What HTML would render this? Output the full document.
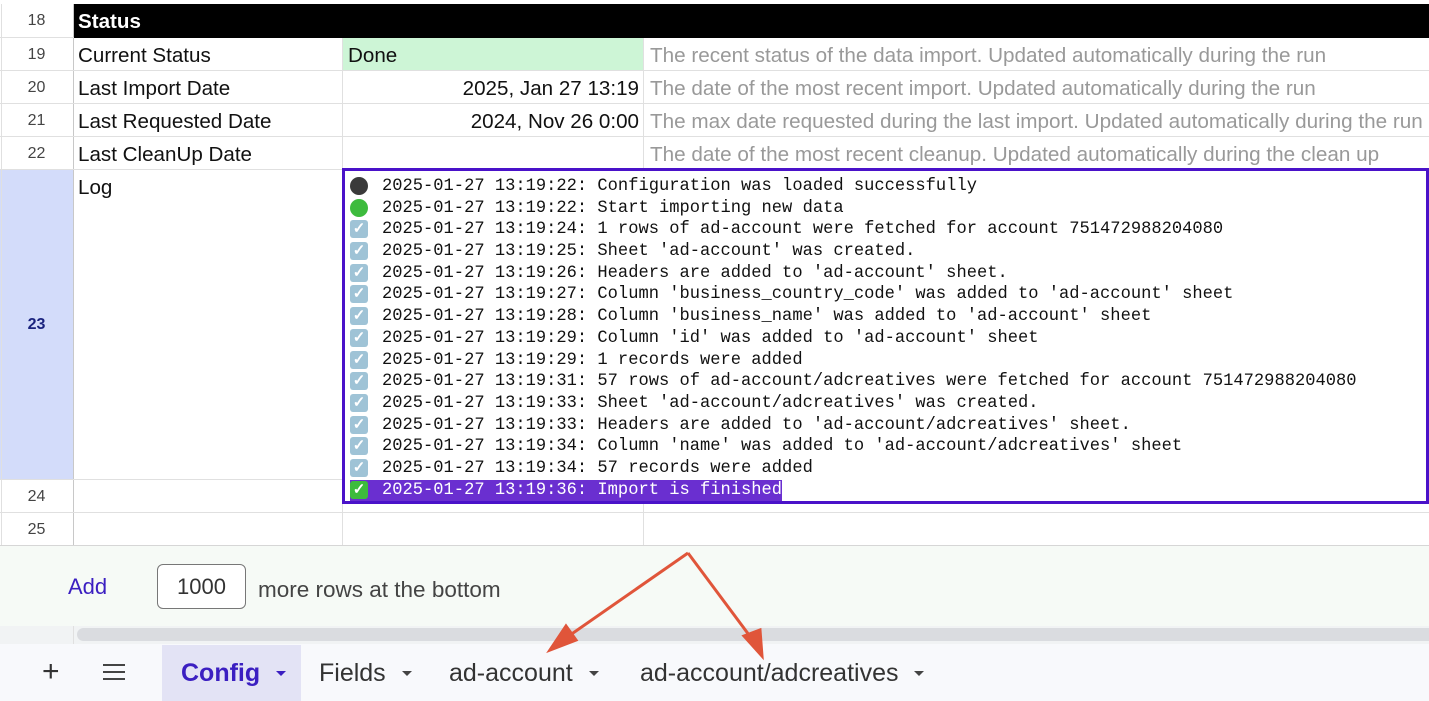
<!DOCTYPE html>
<html><head><style>
*{margin:0;padding:0;box-sizing:border-box}
body{width:1429px;height:701px;overflow:hidden;background:#fff;font-family:"Liberation Sans",Arial,sans-serif;position:relative}
.a{position:absolute}
.hl{position:absolute;height:1px;background:#e0e0e0}
.vl{position:absolute;width:1px;background:#e0e0e0}
.rn{position:absolute;left:0;width:73px;text-align:center;font-size:16px;color:#444}
.t{position:absolute;font-size:20.6px;color:#111;white-space:nowrap}
.g{position:absolute;font-size:20.7px;color:#999;white-space:nowrap;left:650px}
.log{position:absolute;left:342px;top:168px;width:1087px;height:336px;border:3px solid #4a12c9;background:#fff;font-family:"Liberation Mono",monospace;font-size:17.1px;line-height:21.7px;color:#111;padding:5px 0 0 5px;white-space:pre;overflow:hidden}
.ln{height:21.7px}
.ic{display:inline-block;width:18px;height:18px;vertical-align:top;margin-top:1px;margin-right:14px;border-radius:3px}
.ck{background:#9fc3d6;color:#fff;font-family:"Liberation Sans";font-size:15px;line-height:18px;text-align:center;font-weight:bold}
.tab{position:absolute;top:645px;height:56px;font-size:25px;line-height:56px;color:#333;white-space:nowrap}
.tr{display:inline-block;border-left:5px solid transparent;border-right:5px solid transparent;border-top:5px solid #444;vertical-align:5px;margin-left:16px}
</style></head><body>
<div class="a" style="left:74px;top:4px;width:1355px;height:34px;background:#000"></div>
<div class="a" style="left:78px;top:10px;color:#fff;font-weight:bold;font-size:20.6px">Status</div>
<div class="a" style="left:0;top:170px;width:73px;height:309px;background:#d3dcfa"></div>
<div class="a" style="left:343px;top:38px;width:300px;height:32px;background:#cdf5d6"></div>
<div class="vl" style="left:1px;top:4px;height:542px"></div>
<div class="vl" style="left:73px;top:4px;height:542px;background:#c8c8c8"></div>
<div class="vl" style="left:342px;top:38px;height:508px"></div>
<div class="vl" style="left:643px;top:38px;height:508px"></div>
<div class="hl" style="left:0;top:37px;width:74px"></div>
<div class="hl" style="left:0;top:70px;width:1429px"></div>
<div class="hl" style="left:0;top:103px;width:1429px"></div>
<div class="hl" style="left:0;top:136px;width:1429px"></div>
<div class="hl" style="left:0;top:169px;width:1429px"></div>
<div class="hl" style="left:0;top:479px;width:342px"></div>
<div class="hl" style="left:0;top:512px;width:1429px"></div>
<div class="hl" style="left:0;top:545px;width:1429px;background:#d6d6d6"></div>
<div class="rn" style="top:12px">18</div>
<div class="rn" style="top:46px">19</div>
<div class="rn" style="top:79px">20</div>
<div class="rn" style="top:112px">21</div>
<div class="rn" style="top:145px">22</div>
<div class="rn" style="top:316px;font-weight:bold;color:#1a237e">23</div>
<div class="rn" style="top:488px">24</div>
<div class="rn" style="top:521px">25</div>
<div class="t" style="left:78px;top:44px">Current Status</div>
<div class="t" style="left:78px;top:77px">Last Import Date</div>
<div class="t" style="left:78px;top:110px">Last Requested Date</div>
<div class="t" style="left:78px;top:143px">Last CleanUp Date</div>
<div class="t" style="left:78px;top:176px">Log</div>
<div class="t" style="left:348px;top:44px">Done</div>
<div class="t" style="right:790px;top:77px">2025, Jan 27 13:19</div>
<div class="t" style="right:790px;top:110px">2024, Nov 26 0:00</div>
<div class="g" style="top:44px">The recent status of the data import. Updated automatically during the run</div>
<div class="g" style="top:77px">The date of the most recent import. Updated automatically during the run</div>
<div class="g" style="top:110px">The max date requested during the last import. Updated automatically during the run</div>
<div class="g" style="top:143px">The date of the most recent cleanup. Updated automatically during the clean up</div>
<div class="log"><div class="ln"><span class="ic" style="background:#3a3a3a;border-radius:50%"></span>2025-01-27 13:19:22: Configuration was loaded successfully</div><div class="ln"><span class="ic" style="background:#3dbb3d;border-radius:50%"></span>2025-01-27 13:19:22: Start importing new data</div><div class="ln"><span class="ic ck">✓</span>2025-01-27 13:19:24: 1 rows of ad-account were fetched for account 751472988204080</div><div class="ln"><span class="ic ck">✓</span>2025-01-27 13:19:25: Sheet 'ad-account' was created.</div><div class="ln"><span class="ic ck">✓</span>2025-01-27 13:19:26: Headers are added to 'ad-account' sheet.</div><div class="ln"><span class="ic ck">✓</span>2025-01-27 13:19:27: Column 'business_country_code' was added to 'ad-account' sheet</div><div class="ln"><span class="ic ck">✓</span>2025-01-27 13:19:28: Column 'business_name' was added to 'ad-account' sheet</div><div class="ln"><span class="ic ck">✓</span>2025-01-27 13:19:29: Column 'id' was added to 'ad-account' sheet</div><div class="ln"><span class="ic ck">✓</span>2025-01-27 13:19:29: 1 records were added</div><div class="ln"><span class="ic ck">✓</span>2025-01-27 13:19:31: 57 rows of ad-account/adcreatives were fetched for account 751472988204080</div><div class="ln"><span class="ic ck">✓</span>2025-01-27 13:19:33: Sheet 'ad-account/adcreatives' was created.</div><div class="ln"><span class="ic ck">✓</span>2025-01-27 13:19:33: Headers are added to 'ad-account/adcreatives' sheet.</div><div class="ln"><span class="ic ck">✓</span>2025-01-27 13:19:34: Column 'name' was added to 'ad-account/adcreatives' sheet</div><div class="ln"><span class="ic ck">✓</span>2025-01-27 13:19:34: 57 records were added</div><div class="ln"><span style="background:#6a2fd0;color:#fff;display:inline-block;height:21.7px"><span class="ic ck" style="background:#3dbb3d">✓</span>2025-01-27 13:19:36: Import is finished</span></div></div>
<div class="a" style="left:0;top:546px;width:1429px;height:80px;background:#f6faf6"></div>
<div class="a" style="left:68px;top:574px;font-size:22px;color:#3b1fc1">Add</div>
<div class="a" style="left:157px;top:564px;width:89px;height:45px;border:1px solid #777;border-radius:6px;font-size:22px;text-align:center;line-height:43px;color:#333;background:#fff">1000</div>
<div class="a" style="left:258px;top:577px;font-size:22.5px;color:#444">more rows at the bottom</div>
<div class="a" style="left:0;top:626px;width:1429px;height:18px;background:#f1f3f4"></div>
<div class="vl" style="left:73px;top:626px;height:18px"></div>
<div class="a" style="left:77px;top:628px;width:1360px;height:13px;background:#dadce0;border-radius:7px"></div>
<div class="a" style="left:0;top:644px;width:1429px;height:57px;background:#f8f9fc"></div>
<div class="a" style="left:42px;top:655px;font-size:30px;color:#333">+</div>
<div class="a" style="left:103px;top:664px;width:22px;height:16px;border-top:2px solid #444;border-bottom:2px solid #444"><div style="margin-top:5px;height:2px;background:#444"></div></div>
<div class="a" style="left:162px;top:645px;width:139px;height:56px;background:#e3e3f5"></div>
<div class="tab" style="left:181px;color:#3b1fc1;font-weight:bold">Config<span class="tr" style="border-top-color:#3b1fc1"></span></div>
<div class="tab" style="left:319px">Fields<span class="tr"></span></div>
<div class="tab" style="left:449px">ad-account<span class="tr"></span></div>
<div class="tab" style="left:640px">ad-account/adcreatives<span class="tr"></span></div>
<svg class="a" style="left:0;top:0" width="1429" height="701">
<g stroke="#e0553a" stroke-width="3" fill="#e0553a">
<line x1="688" y1="553" x2="563" y2="640"/>
<line x1="688" y1="553" x2="755" y2="643"/>
<polygon points="550,650 566,626 576,640"/>
<polygon points="762,656 744,636 760,630"/>
</g></svg>
</body></html>
